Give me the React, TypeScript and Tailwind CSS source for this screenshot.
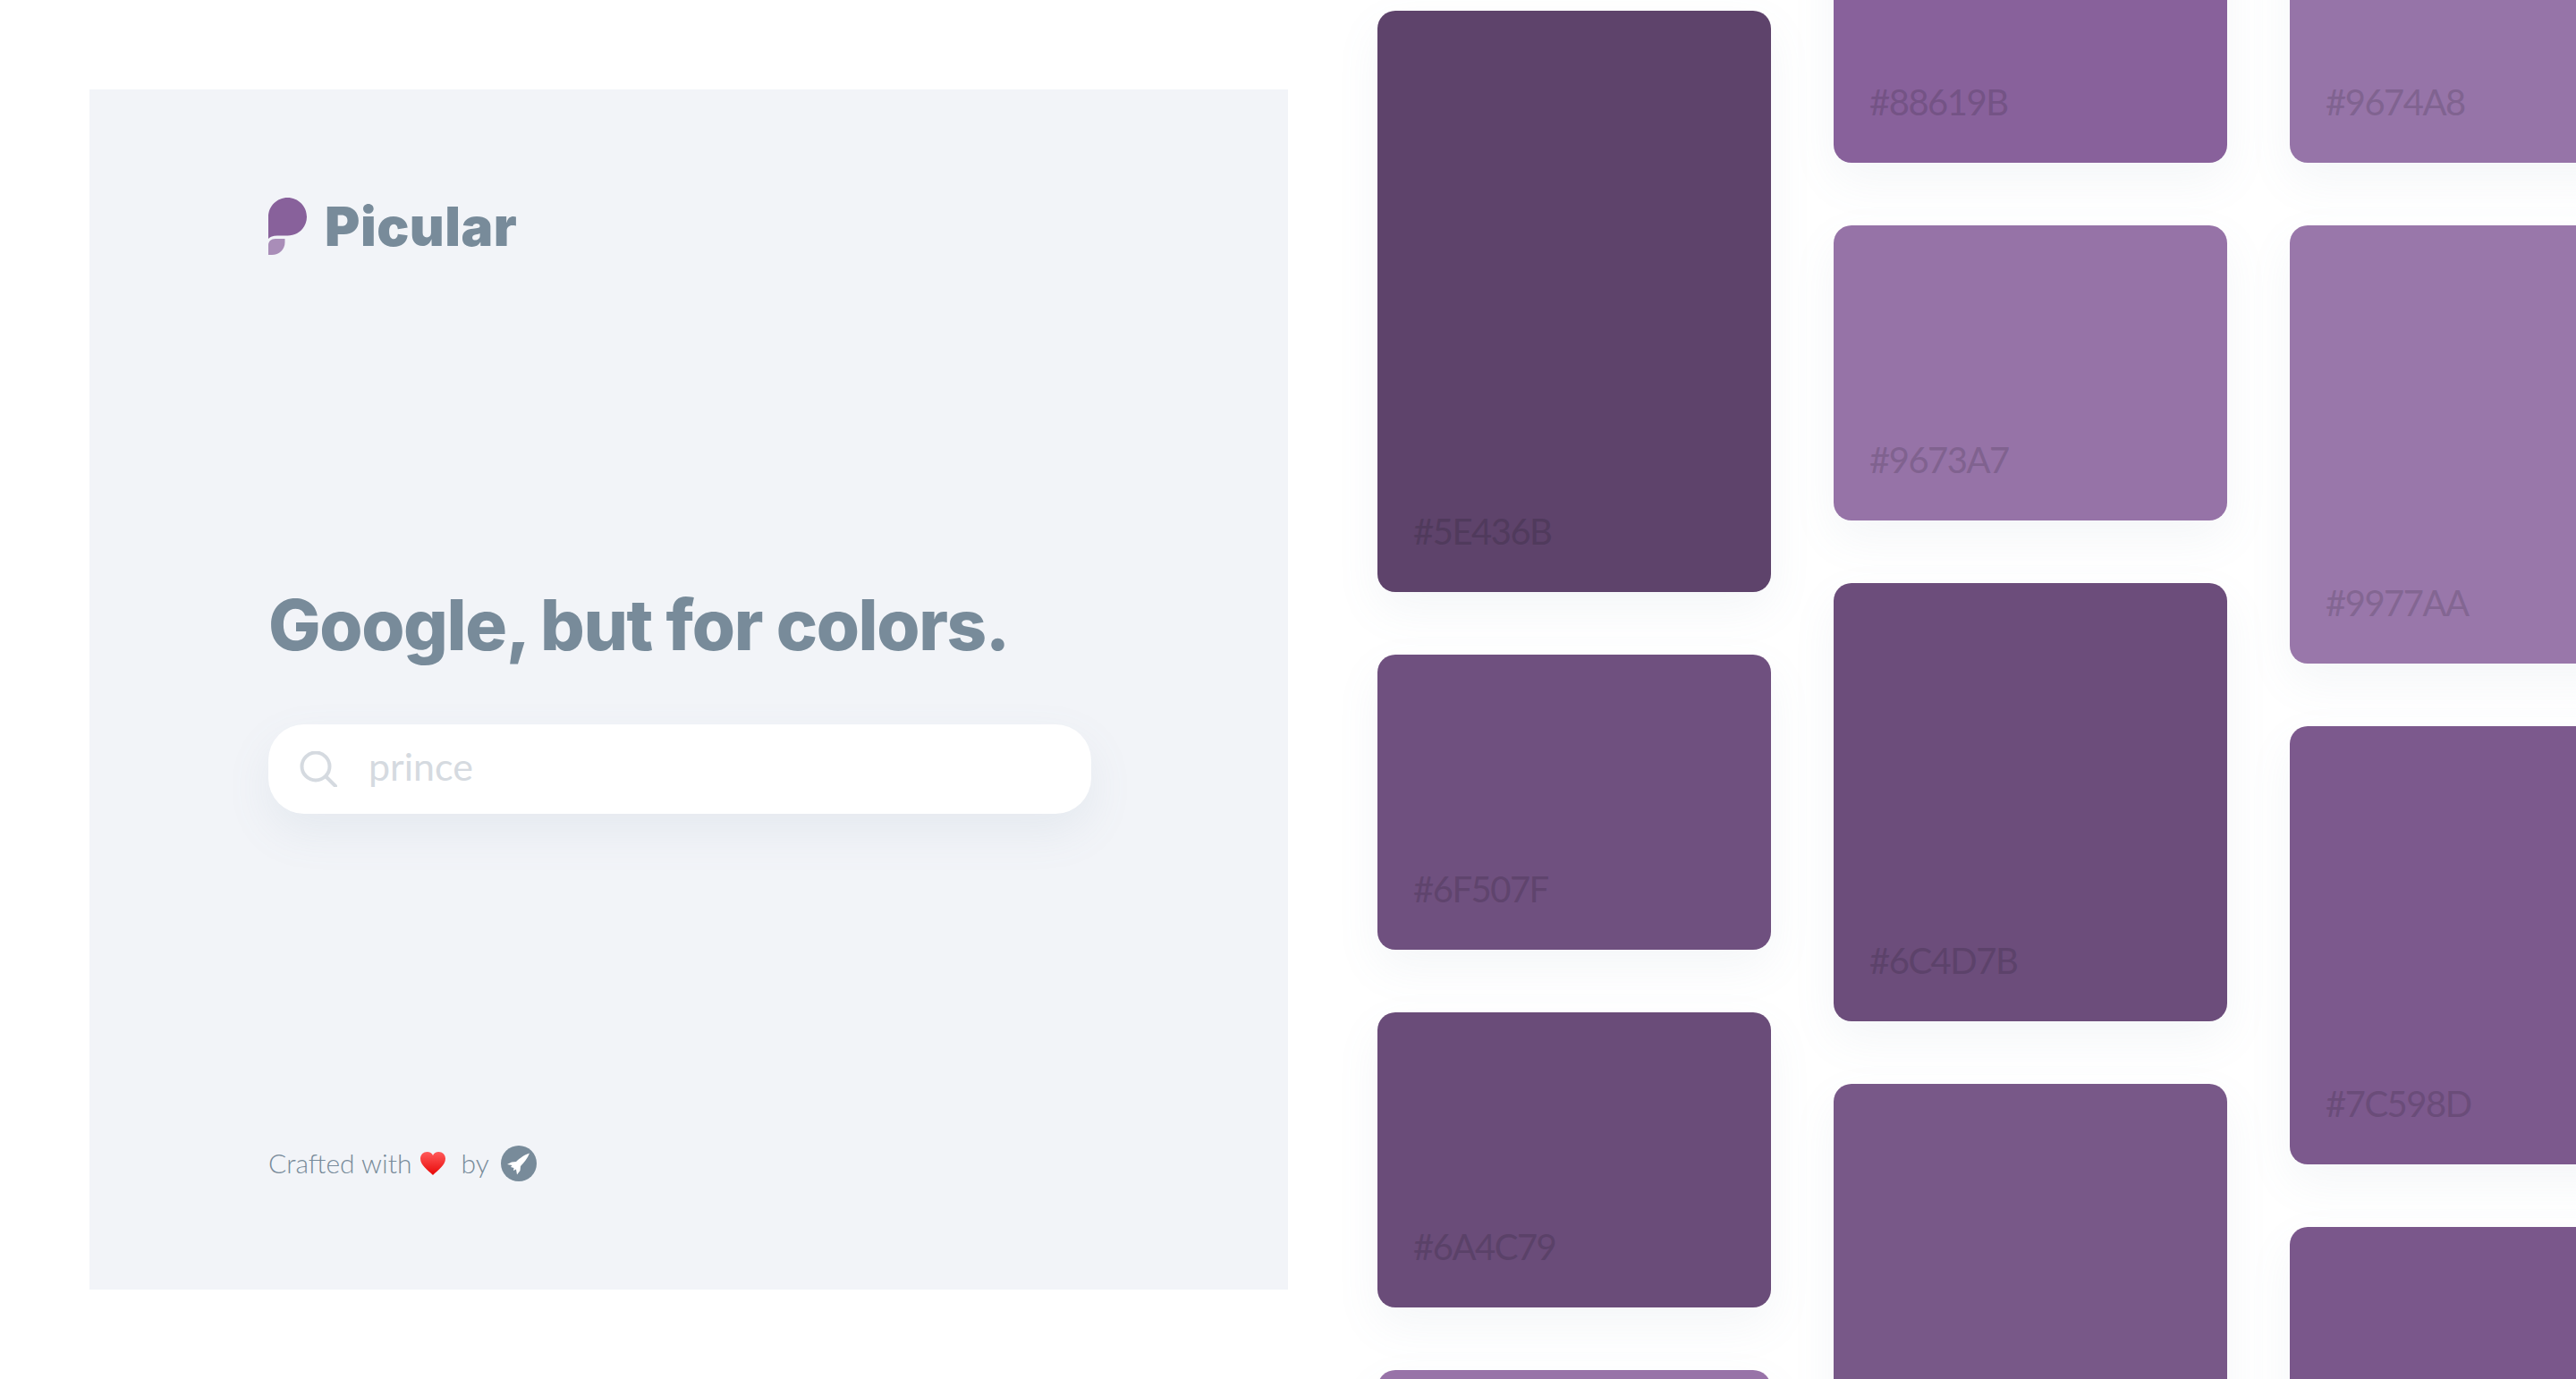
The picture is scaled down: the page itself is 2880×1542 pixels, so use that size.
import React from 'react';

type Swatch = { hex: string; height: number; label?: string };

const columns: { offset: string; swatches: Swatch[] }[] = [
  {
    offset: 'mt-[12px]',
    swatches: [
      { hex: '#5E436B', height: 650, label: 'text-[#503a5c]' },
      { hex: '#6F507F', height: 330, label: 'text-[#5f446d]' },
      { hex: '#6A4C79', height: 330, label: 'text-[#5a4168]' },
      { hex: '#9873A8', height: 330 },
    ],
  },
  {
    offset: '-mt-[148px]',
    swatches: [
      { hex: '#88619B', height: 330, label: 'text-[#745385]' },
      { hex: '#9673A7', height: 330, label: 'text-[#80628f]' },
      { hex: '#6C4D7B', height: 490, label: 'text-[#5c426a]' },
      { hex: '#785888', height: 490 },
    ],
  },
  {
    offset: '-mt-[148px]',
    swatches: [
      { hex: '#9674A8', height: 330, label: 'text-[#806390]' },
      { hex: '#9977AA', height: 490, label: 'text-[#836692]' },
      { hex: '#7C598D', height: 490, label: 'text-[#6a4c79]' },
      { hex: '#7A578B', height: 490 },
    ],
  },
];

const heights: Record<number, string> = {
  330: 'h-[330px]',
  490: 'h-[490px]',
  650: 'h-[650px]',
};

const bgs: Record<string, string> = {
  '#5E436B': 'bg-[#5E436B]',
  '#6F507F': 'bg-[#6F507F]',
  '#6A4C79': 'bg-[#6A4C79]',
  '#9873A8': 'bg-[#9873A8]',
  '#88619B': 'bg-[#88619B]',
  '#9673A7': 'bg-[#9673A7]',
  '#6C4D7B': 'bg-[#6C4D7B]',
  '#785888': 'bg-[#785888]',
  '#9674A8': 'bg-[#9674A8]',
  '#9977AA': 'bg-[#9977AA]',
  '#7C598D': 'bg-[#7C598D]',
  '#7A578B': 'bg-[#7A578B]',
};

function Logo() {
  return (
    <svg viewBox="0 0 43 64" className="w-[43px] h-[64px] shrink-0">
      <path d="M0 21.500C0 9.600 9.600 0 21.500 0S43 9.600 43 21.500 33.400 42.500 21.500 42.500H10C5 42.500 2 44 0 46Z" fill="#88619B" />
      <path d="M0 64V53C0 49 3 46 8 46H18.500V50C18.500 58 12 64 4 64Z" fill="#A98DB8" />
    </svg>
  );
}

function RocketBadge() {
  return (
    <div className="w-10 h-10 rounded-full bg-[#788b9a] flex items-center justify-center">
      <svg viewBox="0 0 40 40" className="w-10 h-10">
        <path d="M32 8.500C27 10 21 14 17 18L12 18.500 7 21 12.500 22 11 24 14.500 25 14 28 17 26.500 18 32.500 21.500 28 22 23C26 19 30 14 32 8.500Z" fill="#fff" />
      </svg>
    </div>
  );
}

function Heart() {
  return (
    <svg viewBox="0 0 28 26" className="w-7 h-[26px]">
      <defs>
        <linearGradient id="heart" x1="0" y1="0" x2="0" y2="1">
          <stop offset="0" stopColor="#ff5a5a" />
          <stop offset="1" stopColor="#e80808" />
        </linearGradient>
      </defs>
      <path d="M14 26C8 20 0 15 0 7.500 0 3 3.500 0 7.500 0 10.500 0 13 1.500 14 4 15 1.500 17.500 0 20.500 0 24.500 0 28 3 28 7.500 28 15 20 20 14 26Z" fill="url(#heart)" />
    </svg>
  );
}

export default function App() {
  return (
    <div className="flex w-[2880px] h-[1542px] overflow-hidden bg-white font-['Lato',sans-serif]">
      <aside className="m-[100px] mr-0 w-[1340px] h-[1342px] shrink-0 flex flex-col bg-[#f2f4f8] pl-[200px] pt-[121px]">
        <div className="flex items-center gap-[20px] h-[64px]">
          <Logo />
          <span className="font-['Inter',sans-serif] text-[60px] leading-none font-black tracking-[0.5px] text-[#788b9a]">Picular</span>
        </div>

        <h1 className="mt-[364px] font-['Inter',sans-serif] text-[78px] leading-[100px] font-extrabold tracking-[-1.4px] text-[#788b9a]">Google, but for colors.</h1>

        <div className="mt-[61px] w-[920px] h-[100px] rounded-[40px] bg-white flex items-center pl-[35px] gap-[35px] shadow-[0_20px_50px_rgba(120,145,165,0.1)]">
          <svg viewBox="0 0 42 40" className="w-[42px] h-10 shrink-0" fill="none" stroke="#d5dae0" strokeWidth="4" strokeLinecap="round">
            <circle cx="18" cy="17" r="15.500" />
            <path d="M30 29L40 39" />
          </svg>
          <span className="pb-[6px] text-[43px] text-[#d5dae0]">prince</span>
        </div>

        <div className="mt-auto mb-[119px] flex items-center text-[30px] font-light text-[#788b9a]">
          <span>Crafted with</span>
          <span className="ml-[9px]"><Heart /></span>
          <span className="ml-[18px]">by</span>
          <span className="ml-[13px]"><RocketBadge /></span>
        </div>
      </aside>

      <main className="flex gap-[70px] ml-[100px]">
        {columns.map((column, i) => (
          <div key={i} className={`flex flex-col gap-[70px] w-[440px] shrink-0 ${column.offset}`}>
            {column.swatches.map((s) => (
              <div
                key={s.hex}
                className={`${bgs[s.hex]} ${heights[s.height]} shrink-0 rounded-[20px] flex items-end pl-10 pb-[43px] shadow-[0_20px_50px_rgba(120,145,165,0.08)]`}
              >
                {s.label && <span className={`text-[40px] leading-[50px] tracking-[-1.5px] ${s.label}`}>{s.hex}</span>}
              </div>
            ))}
          </div>
        ))}
      </main>
    </div>
  );
}
